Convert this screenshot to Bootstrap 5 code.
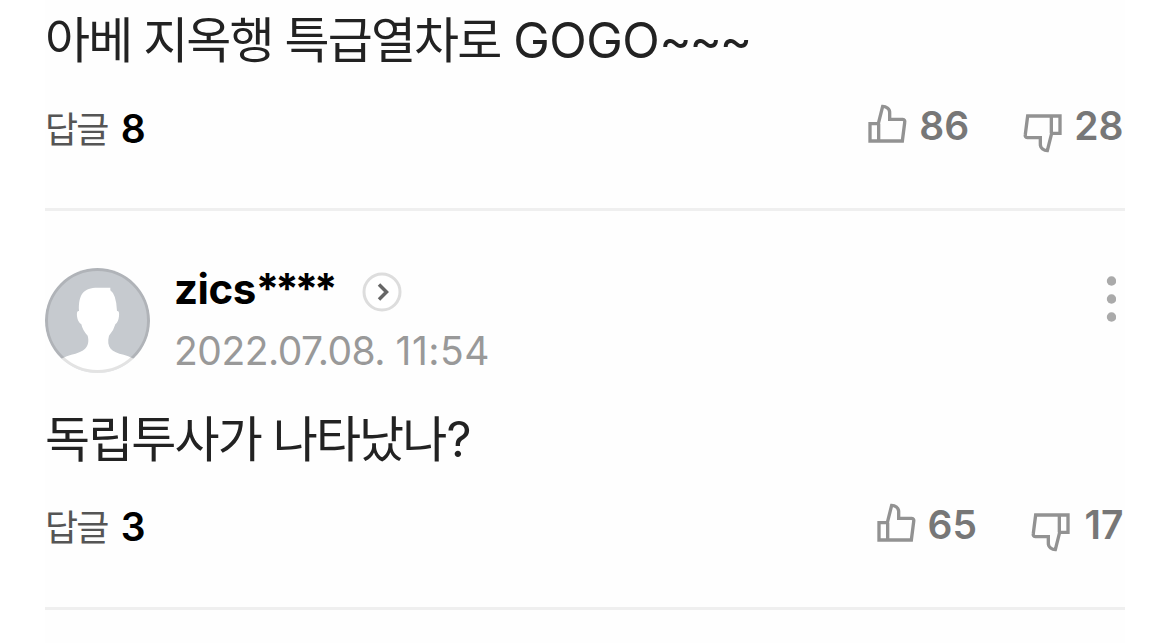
<!DOCTYPE html>
<html lang="ko">
<head>
    <meta charset="UTF-8">
    <meta name="viewport" content="width=device-width, initial-scale=1.0">
    <title>댓글</title>
    <link rel="stylesheet" href="https://cdn.jsdelivr.net/npm/bootstrap@5.3.3/dist/css/bootstrap.min.css">
    <script src="https://cdn.jsdelivr.net/npm/bootstrap@5.3.3/dist/js/bootstrap.bundle.min.js"></script>
    <style>
        body {
            height: 643px;
            font-family: Inter, "Noto Sans CJK KR", sans-serif;
            background: #fff;
        }
        .comment-list {
            width: 1080px;
            height: 643px;
            background: #fefefe;
        }
        .comment {
            border-bottom: 3px solid #efefef;
        }
        .comment-first {
            height: 211px;
        }
        .comment-next {
            height: 399px;
            padding-top: 57px;
        }
        .comment-text {
            height: 74px;
            line-height: 74px;
            font-family: "Noto Sans CJK KR", sans-serif;
            font-size: 49px;
            letter-spacing: -1.9px;
            color: #222;
            white-space: nowrap;
        }
        .comment-first .comment-text {
            margin-bottom: 20px;
        }
        .comment-next .comment-text {
            margin-top: 26px;
            margin-bottom: 20px;
        }
        .comment-text .latin {
            margin-left: 1px;
            font-family: Inter, sans-serif;
            font-size: 49px;
            letter-spacing: -0.5px;
        }
        .comment-text .tilde {
            letter-spacing: -2.2px;
        }
        .reply {
            height: 65px;
            line-height: 65px;
            font-family: "Noto Sans CJK KR", sans-serif;
            font-size: 36px;
            letter-spacing: -1.8px;
            color: #555;
        }
        .comment-first .reply {
            line-height: 67px;
        }
        .reply b {
            margin-left: 13px;
            font-family: Inter, sans-serif;
            font-size: 39px;
            font-weight: 600;
            letter-spacing: 0;
            color: #000;
        }
        .votes {
            margin-right: 1.5px;
        }
        .vote-count {
            height: 64px;
            line-height: 64px;
            font-size: 39px;
            font-weight: 600;
            color: #777;
        }
        .count-narrow {
            padding-left: 2.5px;
        }
        .vote-up {
            margin-right: 54px;
        }
        .thumb {
            width: 39px;
            height: 39px;
            margin-top: 10px;
            margin-right: 12px;
            fill: none;
            stroke: #929292;
            stroke-width: 10;
        }
        .thumb-down {
            margin-top: 20px;
            transform: rotate(180deg);
        }
        .avatar {
            width: 105px;
            height: 105px;
        }
        .user-name {
            height: 44px;
            line-height: 42px;
            font-size: 42px;
            font-weight: 700;
            letter-spacing: -0.5px;
            color: #000;
        }
        .user-name .masked {
            letter-spacing: -4px;
        }
        .arrow {
            margin-top: 4px;
            margin-left: 28px;
        }
        .comment-date {
            margin-top: 17px;
            height: 44px;
            line-height: 43px;
            font-size: 39px;
            letter-spacing: -0.5px;
            color: #999;
        }
        .comment-date .time {
            letter-spacing: 0.5px;
        }
        .more {
            width: 10px;
            height: 46px;
            margin-top: 8px;
            margin-right: 9px;
        }
    </style>
</head>
<body>
    <svg class="d-none">
        <symbol id="thumb" viewBox="0 0 117 117">
            <path d="M6 59H31L44 7C53 7 66 14 65 27V46H104Q112 47 110 56L103 111H6Z"/>
            <path d="M32 59V111"/>
        </symbol>
    </svg>

    <div class="comment-list mx-auto overflow-hidden">
        <div class="comment comment-first">
            <div class="comment-text">아베 지옥행 특급열차로 <span class="latin">GOGO<span class="tilde">~~~</span></span></div>
            <div class="d-flex justify-content-between">
                <div class="reply">답글<b>8</b></div>
                <div class="d-flex votes">
                    <div class="d-flex vote-up">
                        <svg class="thumb"><use href="#thumb"/></svg>
                        <span class="vote-count">86</span>
                    </div>
                    <div class="d-flex">
                        <svg class="thumb thumb-down"><use href="#thumb"/></svg>
                        <span class="vote-count">28</span>
                    </div>
                </div>
            </div>
        </div>

        <div class="comment comment-next">
            <div class="d-flex">
                <!-- Default profile picture -->
                <svg class="avatar" viewBox="0 0 315 315">
                    <defs>
                        <clipPath id="face"><circle cx="157.500" cy="157.500" r="157.500"/></clipPath>
                    </defs>
                    <g clip-path="url(#face)">
                        <rect width="315" height="315" fill="#c6cacf"/>
                        <path fill="#fff" d="M102 129C100 78 116 59 158 59H196V67Q214 79 216 129Q224 128 222 145Q220 163 211 169Q207 186 192 203C183 238 200 252 236 260Q250 264 263 271L315 315H0L52 271Q65 264 79 260C115 252 137 238 128 203Q113 188 109 169Q98 162 96 145Q94 128 102 129Z"/>
                        <circle cx="157.500" cy="157.500" r="153" fill="none" stroke="#000" stroke-opacity=".11" stroke-width="9"/>
                    </g>
                </svg>
                <div class="ms-4 flex-grow-1">
                    <div class="d-flex">
                        <span class="user-name">zics<span class="masked">****</span></span>
                        <svg class="arrow" width="40" height="40" viewBox="0 0 40 40">
                            <circle cx="20" cy="20" r="18" fill="#fff" stroke="#ddd" stroke-width="3"/>
                            <path d="M17 12.500L24.500 20L17 27.500" fill="none" stroke="#666" stroke-width="3.500"/>
                        </svg>
                    </div>
                    <div class="comment-date">2022.07.08. <span class="time">11:54</span></div>
                </div>
                <svg class="more" viewBox="0 0 10 46" fill="#aaa">
                    <circle cx="5.500" cy="5" r="4.700"/>
                    <circle cx="5.500" cy="23" r="4.700"/>
                    <circle cx="5.500" cy="41" r="4.700"/>
                </svg>
            </div>
            <div class="comment-text">독립투사가 나타났나<span class="latin">?</span></div>
            <div class="d-flex justify-content-between">
                <div class="reply">답글<b>3</b></div>
                <div class="d-flex votes">
                    <div class="d-flex vote-up">
                        <svg class="thumb"><use href="#thumb"/></svg>
                        <span class="vote-count">65</span>
                    </div>
                    <div class="d-flex">
                        <svg class="thumb thumb-down"><use href="#thumb"/></svg>
                        <span class="vote-count count-narrow">17</span>
                    </div>
                </div>
            </div>
        </div>
    </div>
</body>
</html>
